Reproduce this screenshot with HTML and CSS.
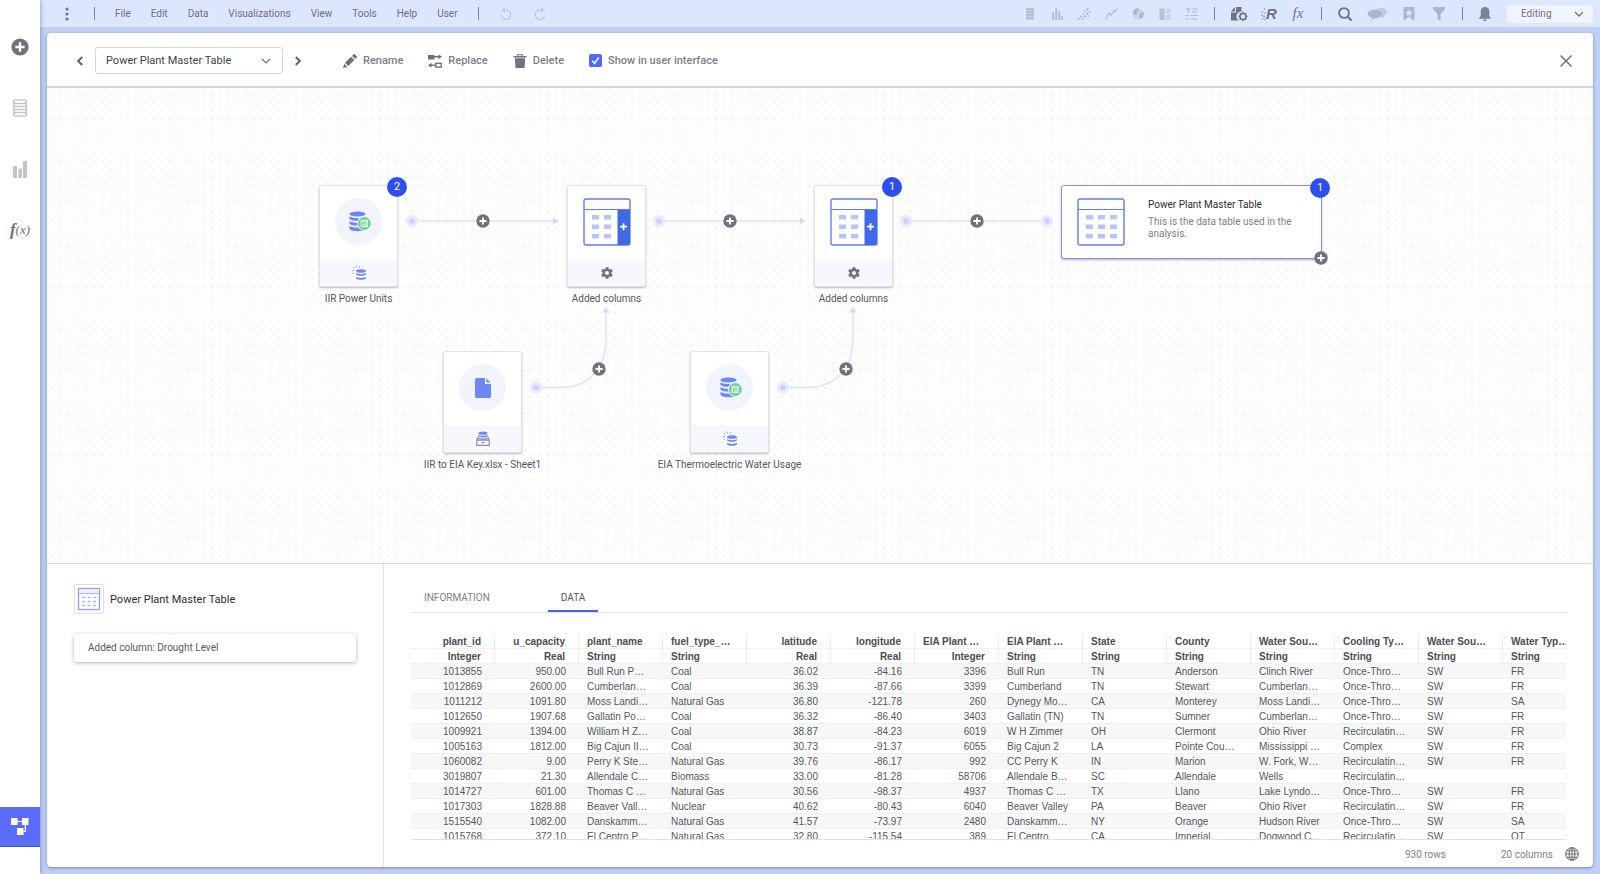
FILE: index.html
```html
<!DOCTYPE html>
<html lang="en">

<head>
    <meta charset="UTF-8">
    <meta name="viewport" content="width=device-width, initial-scale=1.0">
    <title>Data Canvas - Power Plant Master Table</title>
    <link rel="stylesheet" href="styles.css">
</head>

<body>
    <!-- Shared icons -->
    <svg class="sprite" aria-hidden="true">
        <symbol id="i-plus" viewBox="0 0 14 14">
            <circle cx="7" cy="7" r="6.7" fill="#6f727d" />
            <path d="M7 3.4v7.2M3.4 7h7.2" stroke="#fff" stroke-width="1.8" />
        </symbol>
        <symbol id="i-db" viewBox="-2 1 24 24">
            <g fill="#6d87f8">
                <ellipse cx="8.500" cy="5" rx="8" ry="2.500" />
                <path d="M.5 7.200c2 2.400 14 2.400 16 0v2.800c-2 2.600-14 2.600-16 0z" />
                <path d="M.5 12c2 2.400 14 2.400 16 0v2.800c-2 2.600-14 2.600-16 0z" />
                <path d="M.5 16.800c2 2.400 14 2.400 16 0v3.200c-2 3-14 3-16 0z" />
            </g>
            <circle cx="15.300" cy="14.500" r="7.300" fill="#f1f4fd" />
            <circle cx="15.300" cy="14.500" r="6.400" fill="#6fd191" />
            <rect x="12.300" y="11.500" width="6" height="6" fill="none" stroke="#e4f8eb" stroke-width="1.200" />
            <path d="M12.300 13h6M14.800 17.500V15H17v2.500" fill="none" stroke="#e4f8eb" />
        </symbol>
        <symbol id="i-live" viewBox="0 0 16 16">
            <g fill="#6d87f8">
                <ellipse cx="10" cy="6" rx="5" ry="1.800" />
                <path d="M5 8c1.500 1.500 8.500 1.500 10 0v1.200c-1.500 2-8.500 2-10 0z" />
                <path d="M5 11.800c1.500 1.500 8.500 1.500 10 0v1.500c-1.500 2-8.500 2-10 0z" />
            </g>
            <path d="M.8 5.500h2M1.800 2l1.500 1.500M5.200.5v2M8.800 1l-1 1.600M3 7.500L1.500 9" stroke="#8fa2fa" stroke-width="1" />
        </symbol>
        <symbol id="i-stored" viewBox="0 0 16 16">
            <path d="M3.500 5.500L1.800 9v5.400h12.400V9l-1.700-3.500M1.800 9.200h12.400" fill="none" stroke="#8b8f9c" stroke-width="1.200" />
            <path d="M6.600 11.600h2.800" stroke="#6f727d" />
            <g fill="#6d87f8">
                <ellipse cx="8" cy="2.200" rx="4.500" ry="1.600" />
                <path d="M3.500 3.800c1.500 1.300 7.500 1.300 9 0v1.400c-1.500 1.600-7.500 1.600-9 0z" />
                <path d="M3.500 6.600c1.500 1.300 7.500 1.300 9 0v1.400c-2 1-7 1-9 0z" />
            </g>
        </symbol>
        <symbol id="i-gear" viewBox="0 0 24 24">
            <path fill="#6f727d" d="M19.430 12.980c.04-.32.07-.64.07-.98s-.03-.66-.07-.98l2.110-1.650c.19-.15.24-.42.12-.64l-2-3.460c-.12-.22-.39-.3-.61-.22l-2.490 1c-.52-.4-1.080-.73-1.690-.98l-.38-2.650C14.460 2.180 14.250 2 14 2h-4c-.25 0-.46.18-.49.42l-.38 2.650c-.61.25-1.170.59-1.690.98l-2.490-1c-.23-.09-.49 0-.61.22l-2 3.460c-.13.22-.07.49.12.64l2.110 1.650c-.04.32-.07.65-.07.98s.03.66.07.98l-2.110 1.650c-.19.15-.24.42-.12.64l2 3.460c.12.22.39.3.61.22l2.490-1c.52.4 1.080.73 1.690.98l.38 2.650c.03.24.24.42.49.42h4c.25 0 .46-.18.49-.42l.38-2.650c.61-.25 1.170-.59 1.690-.98l2.490 1c.23.09.49 0 .61-.22l2-3.460c.12-.22.07-.49-.12-.64zM12 15.500a3.500 3.500 0 1 1 0-7 3.500 3.500 0 0 1 0 7z" />
        </symbol>
        <symbol id="i-table" viewBox="0 0 48 48">
            <rect x="1" y="1" width="46" height="46" rx="2" fill="#fff" stroke="#5f7df5" stroke-width="1.400" />
            <path d="M1 11.500h46" stroke="#5f7df5" stroke-width="1.200" />
            <g fill="#b9c3fb">
                <path d="M9 17h7v4.500H9zM21 17h7v4.500h-7zM33 17h7v4.500h-7z" />
                <path d="M9 26.500h7V31H9zM21 26.500h7V31h-7zM33 26.500h7V31h-7z" />
                <path d="M9 36h7v4.500H9zM21 36h7v4.500h-7zM33 36h7v4.500h-7z" />
            </g>
        </symbol>
        <symbol id="i-addcols" viewBox="0 0 48 48">
            <rect x="1" y="1" width="46" height="46" rx="2" fill="#fff" stroke="#5f7df5" stroke-width="1.400" />
            <path d="M34.500 11.500H47V45a2 2 0 0 1-2 2H34.500z" fill="#4169e6" />
            <path d="M1 11.500h46" stroke="#5f7df5" stroke-width="1.200" />
            <g fill="#b9c3fb">
                <path d="M9 17h7v4.500H9zM21 17h7v4.500h-7zM9 26.500h7V31H9zM21 26.500h7V31h-7zM9 36h7v4.500H9zM21 36h7v4.500h-7z" />
            </g>
            <path d="M40.500 25.200v7M37 28.700h7" stroke="#fff" stroke-width="1.800" />
        </symbol>
    </svg>

    <!-- Left sidebar -->
    <nav class="sidebar" aria-label="Authoring bar">
        <button class="side-btn" aria-label="Files and data">
            <svg width="18" height="18"><use href="#i-plus" /></svg>
        </button>
        <button class="side-btn" aria-label="Data in analysis">
            <svg width="14" height="18" viewBox="0 0 14 18">
                <rect x="0.800" y="1" width="12.400" height="16" rx="1" fill="#fff" stroke="#c3c5cc" stroke-width="1.600" />
                <path d="M1 4.500h12M1 7.500h12M1 10.500h12M1 13.500h12" stroke="#c3c5cc" stroke-width="1.300" />
            </svg>
        </button>
        <button class="side-btn" aria-label="Visualization types">
            <svg width="14" height="18" viewBox="0 0 14 18">
                <path d="M0 6h4v12H0zM5.500 8.500H9V18H5.500zM10 1h4v17h-4z" fill="#c3c5cc" />
            </svg>
        </button>
        <button class="side-btn side-fx" aria-label="Data functions"><b>f</b>(x)</button>
        <button class="side-btn side-canvas" aria-label="Data canvas">
            <svg width="18" height="18" viewBox="0 0 18 18">
                <path d="M0 0h6.500v7H0zM11 0h6.500v7H11zM6 10h6.500v7H6z" fill="#fff" />
                <path d="M6 3.500h6M14.300 6v7.500H12" fill="none" stroke="#fff" stroke-width="1.200" />
            </svg>
        </button>
    </nav>

    <div class="main">
        <!-- Menu bar -->
        <header class="topbar">
            <button class="more-btn" aria-label="More">
                <svg width="14" height="16" viewBox="0 0 14 16" fill="#6f7482">
                    <circle cx="7" cy="3" r="1.600" />
                    <circle cx="7" cy="8" r="1.600" />
                    <circle cx="7" cy="13" r="1.600" />
                </svg>
            </button>
            <span class="sep"></span>
            <nav class="menu">
                <a href="#file">File</a>
                <a href="#edit">Edit</a>
                <a href="#data">Data</a>
                <a href="#visualizations">Visualizations</a>
                <a href="#view">View</a>
                <a href="#tools">Tools</a>
                <a href="#help">Help</a>
                <a href="#user">User</a>
            </nav>
            <span class="sep"></span>
            <div class="history">
                <button aria-label="Undo">
                    <svg width="14" height="14" viewBox="0 0 14 14">
                        <path d="M5 3.200a4.800 4.800 0 1 1-2.800 5" fill="none" stroke="#bdc6de" stroke-width="1.200" />
                        <path d="M6 .5v5.200L2.500 3z" fill="#bdc6de" />
                    </svg>
                </button>
                <button aria-label="Redo">
                    <svg width="14" height="14" viewBox="0 0 14 14">
                        <path d="M9 3.200a4.800 4.800 0 1 0 2.800 5" fill="none" stroke="#bdc6de" stroke-width="1.200" />
                        <path d="M8 .5v5.200L11.500 3z" fill="#bdc6de" />
                    </svg>
                </button>
            </div>

            <div class="tools">
                <div class="tool-group faded">
                    <button aria-label="Table">
                        <svg width="14" height="14" viewBox="0 0 14 14"><path d="M3 1h8v12H3z" fill="#c3cade" /><path d="M3 2h8M3 5h8M3 8h8M3 11h8" stroke="#a9b0c4" stroke-width="1.600" /></svg>
                    </button>
                    <button aria-label="Bar chart">
                        <svg width="14" height="14" viewBox="0 0 14 14"><path d="M3.200 13V5M6.200 13V1.500M9.200 13V4M12 13V9" stroke="#a9b0c4" stroke-width="1.800" /></svg>
                    </button>
                    <button aria-label="Scatter plot">
                        <svg width="14" height="14" viewBox="0 0 14 14" fill="#a9b0c4"><circle cx="2" cy="12" r="1" /><circle cx="4" cy="9.500" r="1" /><circle cx="5.500" cy="12" r="1" /><circle cx="6" cy="7" r="1" /><circle cx="8" cy="9.500" r="1.200" /><circle cx="7.500" cy="4" r="1" /><circle cx="10" cy="6.500" r="1.200" /><circle cx="10.500" cy="2.500" r="1.200" /><circle cx="12.500" cy="5" r="1" /><circle cx="11.500" cy="9" r="1" /></svg>
                    </button>
                    <button aria-label="Line chart">
                        <svg width="14" height="14" viewBox="0 0 14 14"><path d="M1.500 12.500L5 6l2 2.500 3-5 .8 1.500L13.500 1.500" fill="none" stroke="#a9b0c4" stroke-width="1.200" /></svg>
                    </button>
                    <button aria-label="Map chart">
                        <svg width="14" height="14" viewBox="0 0 14 14"><circle cx="7" cy="7" r="5.800" fill="#c9d1e6" /><path d="M2.500 3.500Q5 .8 7.500 1.500L8 4 5.500 5.500 6 7.500 4 8 2 6zM8.500 7l3-2.500 1.500 1.500-.8 4L9.500 12 8 9.500z" fill="#a3aabd" /></svg>
                    </button>
                    <button aria-label="Treemap">
                        <svg width="14" height="14" viewBox="0 0 14 14"><path d="M1.500 1.500h5.200v11.500H1.500z" fill="#b3b9ca" /><path d="M8 1.500h4.700v5H8zM8 8h4.700v5H8z" fill="#c6cce0" /></svg>
                    </button>
                    <button aria-label="Text area">
                        <svg width="14" height="14" viewBox="0 0 14 14"><path d="M1 1.800h4.500M3.200 1.800v4M7 2h6M7 5h5M1 8.500h3M5.500 8.500H13M1 12h3M5.500 12H13" fill="none" stroke="#a9b0c4" stroke-width="1.200" /></svg>
                    </button>
                </div>
                <span class="sep"></span>
                <div class="tool-group tight">
                    <button aria-label="Document settings">
                        <svg width="18" height="16" viewBox="0 0 18 16"><path d="M6 1h5.500v4.500A4.800 4.800 0 0 0 9 14.500H1V6.500h5z" fill="#6f7482" /><path d="M5 1v4.500H.8z" fill="#6f7482" /><circle cx="13" cy="10.500" r="3" fill="none" stroke="#6f7482" stroke-width="1.600" /><path d="M13 5.800v1.500M13 13.700v1.500M8.500 10.500H10M16 10.500h1.500M9.800 7.300l1 1M15.200 12.700l1 1M16.200 7.300l-1 1M10.800 12.700l-1 1" stroke="#6f7482" stroke-width="1.400" /></svg>
                    </button>
                    <button class="r-btn" aria-label="R script">
                        <svg width="5" height="14" viewBox="0 0 5 14" fill="#8c91a0"><circle cx="3.500" cy="2" r=".8" /><circle cx="1.500" cy="5" r=".8" /><circle cx="4" cy="6" r=".8" /><circle cx="1" cy="8.500" r=".8" /><circle cx="3" cy="9.500" r=".9" /><circle cx="1.500" cy="12" r=".8" /><circle cx="4" cy="12.500" r=".7" /></svg>
                        R
                    </button>
                    <button class="fx-btn" aria-label="Expression">fx</button>
                </div>
                <span class="sep"></span>
                <div class="tool-group wide">
                    <button aria-label="Search">
                        <svg width="16" height="16" viewBox="0 0 16 16"><circle cx="7" cy="7" r="4.900" fill="none" stroke="#6f7482" stroke-width="1.900" /><path d="M10.500 10.500l4 4" stroke="#6f7482" stroke-width="2.200" /></svg>
                    </button>
                    <button aria-label="Comments">
                        <svg width="20" height="16" viewBox="0 0 20 16"><path d="M14 2c3.300 0 5.800 1.900 5.800 4.300 0 1.700-1 3-2.800 3.800l.6 2.400-3.200-2z" fill="#c2cae2" /><ellipse cx="13.500" cy="6" rx="6" ry="4.200" fill="#c2cae2" /><path d="M8 3.800c4 0 7 1.800 7 4.200s-3 4.300-7 4.300l-3.600 2 .5-2.600C2.300 11 .8 9.600.8 8 .8 5.600 4 3.800 8 3.800z" fill="#aeb5ca" /></svg>
                    </button>
                    <button aria-label="Bookmarks">
                        <svg width="16" height="16" viewBox="0 0 16 16"><path d="M2.500 1h11v14L8 10.800 2.500 15z" fill="#aeb5ca" /><path d="M8 3l1.100 2.500 2.700.2-2 1.800.6 2.600L8 8.700l-2.400 1.400.6-2.600-2-1.800 2.700-.2z" fill="#dce6fe" /></svg>
                    </button>
                    <button aria-label="Filters">
                        <svg width="16" height="16" viewBox="0 0 16 16"><path d="M2 1h12v2L9.500 8v6.800l-3-1.800V8L2 3z" fill="#aeb5ca" /></svg>
                    </button>
                </div>
                <span class="sep"></span>
                <button aria-label="Notifications">
                    <svg width="14" height="16" viewBox="0 0 14 16"><path d="M7 1c2.800 0 4.300 2 4.300 4.600V10l1.500 2v.8H1.200V12l1.500-2V5.600C2.700 3 4.200 1 7 1zM5.200 13.500h3.600c-.2 1-.9 1.500-1.800 1.500s-1.600-.5-1.800-1.500z" fill="#7d8291" /></svg>
                </button>
                <select class="mode-select" aria-label="Mode">
                    <option>Editing</option>
                    <option>Viewing</option>
                </select>
            </div>
        </header>

        <!-- Data canvas panel -->
        <main class="panel">
            <div class="panel-header">
                <button class="step-btn" aria-label="Previous table">
                    <svg width="14" height="14" viewBox="0 0 14 14"><path d="M9.200 3L5.200 7l4 4" fill="none" stroke="#5f626d" stroke-width="2" /></svg>
                </button>
                <select class="table-select" aria-label="Data table">
                    <option>Power Plant Master Table</option>
                </select>
                <button class="step-btn" aria-label="Next table">
                    <svg width="14" height="14" viewBox="0 0 14 14"><path d="M4.800 3l4 4-4 4" fill="none" stroke="#5f626d" stroke-width="2" /></svg>
                </button>
                <div class="actions">
                    <button>
                        <svg width="14" height="14" viewBox="0 0 14 14" fill="#6f727d"><path d="M0 14l1.200-4.300 3.200 3.200zM2 8.800l6-6L11.300 6l-6 6zM9 2l1.500-1.600c.4-.4 1-.4 1.400 0l1.800 1.800c.4.4.4 1 0 1.400L12.200 5z" /></svg>
                        Rename
                    </button>
                    <button>
                        <svg width="14" height="14" viewBox="0 0 14 14"><path d="M0 1h6.500v4.500H0z" fill="#6f727d" /><path d="M6 2.800h5M3 11.200h4" stroke="#6f727d" stroke-width="1.400" /><path d="M10.500.3L14 2.800l-3.500 2.500zM3.500 8.700L0 11.200l3.500 2.500z" fill="#6f727d" /><rect x="7.700" y="9.300" width="5.500" height="3.800" fill="none" stroke="#6f727d" stroke-width="1.400" /></svg>
                        Replace
                    </button>
                    <button>
                        <svg width="14" height="14" viewBox="0 0 14 14"><path d="M.5 2h13v1.500H.5zM1.800 4.300h10.400L11.500 14h-9z" fill="#6f727d" /><path d="M4.500 2V.7h5V2" fill="none" stroke="#6f727d" /></svg>
                        Delete
                    </button>
                    <label class="check">
                        <input type="checkbox" checked>
                        Show in user interface
                    </label>
                </div>
                <button class="close-btn" aria-label="Close">
                    <svg width="14" height="14" viewBox="0 0 14 14"><path d="M1.500 1.500l11 11M12.500 1.500l-11 11" stroke="#6f727d" stroke-width="1.500" /></svg>
                </button>
            </div>

            <!-- Node canvas -->
            <section class="canvas" aria-label="Data canvas">
                <svg class="edges" aria-hidden="true">
                    <defs>
                        <pattern id="dots" x="1.600" y="5" width="8.400" height="8.400" patternUnits="userSpaceOnUse">
                            <rect width="1.500" height="1.500" x="3" y="0.200" fill="#e6e8ef" />
                        </pattern>
                    </defs>
                    <rect width="100%" height="100%" fill="url(#dots)" />
                    <g fill="none" stroke="#dfe4fd" stroke-width="1.600">
                        <path d="M365 133h143M612 133h143M859 133h141" />
                        <path d="M489 299.500h24c30 0 46-20 46-50V224M736 299.500h24c30 0 46-20 46-50V224" />
                    </g>
                    <g fill="#d2d9fc">
                        <path d="M506 129.500l5.500 3.500-5.500 3.500zM753 129.500l5.500 3.500-5.500 3.500z" />
                        <path d="M555.500 224.500l3.500-5.500 3.500 5.500zM802.500 224.500l3.500-5.500 3.500 5.500z" />
                    </g>
                    <g fill="#c9d2fc" stroke="#e7ebfe" stroke-width="3.500">
                        <circle cx="365" cy="133" r="4.500" />
                        <circle cx="612" cy="133" r="4.500" />
                        <circle cx="859" cy="133" r="4.500" />
                        <circle cx="1000" cy="133" r="4.500" />
                        <circle cx="489" cy="299.500" r="4.500" />
                        <circle cx="736" cy="299.500" r="4.500" />
                    </g>
                </svg>

                <article class="node node-units">
                    <div class="card">
                        <div class="card-body"><span class="disc"><svg width="24" height="24"><use href="#i-db" /></svg></span></div>
                        <div class="card-foot"><svg width="16" height="16"><use href="#i-live" /></svg></div>
                    </div>
                    <span class="badge">2</span>
                    <p>IIR Power Units</p>
                </article>

                <article class="node node-added-1">
                    <div class="card">
                        <div class="card-body"><svg width="48" height="48"><use href="#i-addcols" /></svg></div>
                        <button class="card-foot" aria-label="Settings"><svg width="14" height="14"><use href="#i-gear" /></svg></button>
                    </div>
                    <p>Added columns</p>
                </article>

                <article class="node node-added-2">
                    <div class="card">
                        <div class="card-body"><svg width="48" height="48"><use href="#i-addcols" /></svg></div>
                        <button class="card-foot" aria-label="Settings"><svg width="14" height="14"><use href="#i-gear" /></svg></button>
                    </div>
                    <span class="badge">1</span>
                    <p>Added columns</p>
                </article>

                <article class="node node-key">
                    <div class="card">
                        <div class="card-body"><span class="disc"><svg width="16" height="20" viewBox="0 0 16 20"><path d="M1.500 0H10v6h6v12.500a1.500 1.500 0 0 1-1.500 1.500h-13A1.500 1.500 0 0 1 0 18.500v-17A1.500 1.500 0 0 1 1.500 0zM11.500.5L15.500 4.500h-4z" fill="#6d87f8" /></svg></span></div>
                        <div class="card-foot"><svg width="16" height="16"><use href="#i-stored" /></svg></div>
                    </div>
                    <p>IIR to EIA Key.xlsx - Sheet1</p>
                </article>

                <article class="node node-usage">
                    <div class="card">
                        <div class="card-body"><span class="disc"><svg width="24" height="24"><use href="#i-db" /></svg></span></div>
                        <div class="card-foot"><svg width="16" height="16"><use href="#i-live" /></svg></div>
                    </div>
                    <p>EIA Thermoelectric Water Usage</p>
                </article>

                <article class="result">
                    <svg width="48" height="48"><use href="#i-table" /></svg>
                    <div>
                        <h2>Power Plant Master Table</h2>
                        <p>This is the data table used in the analysis.</p>
                    </div>
                    <span class="badge">1</span>
                    <button class="add-btn add-result" aria-label="Add"><svg width="14" height="14"><use href="#i-plus" /></svg></button>
                </article>

                <button class="add-btn add-1" aria-label="Add step"><svg width="14" height="14"><use href="#i-plus" /></svg></button>
                <button class="add-btn add-2" aria-label="Add step"><svg width="14" height="14"><use href="#i-plus" /></svg></button>
                <button class="add-btn add-3" aria-label="Add step"><svg width="14" height="14"><use href="#i-plus" /></svg></button>
                <button class="add-btn add-4" aria-label="Add step"><svg width="14" height="14"><use href="#i-plus" /></svg></button>
                <button class="add-btn add-5" aria-label="Add step"><svg width="14" height="14"><use href="#i-plus" /></svg></button>
            </section>

            <!-- Details -->
            <section class="details">
                <aside class="summary">
                    <h2>
                        <span class="thumb"><svg width="24" height="24" viewBox="0 0 24 24"><rect x="1.500" y="1.500" width="21" height="21" fill="#fff" stroke="#8c9df9" stroke-width="1.300" /><path d="M2 2.500h20v4H2z" fill="#eceffe" /><path d="M2 6.500h20" stroke="#a9b6fb" /><path d="M5 10.500h3m2.500 0h3m2.500 0h3M5 14.500h3m2.500 0h3m2.500 0h3M5 18.500h3m2.500 0h3m2.500 0h3" stroke="#a9b6fb" stroke-width="1.700" /></svg></span>
                        Power Plant Master Table
                    </h2>
                    <p class="step">Added column: Drought Level</p>
                </aside>

                <div class="preview">
                    <div class="tabs" role="tablist">
                        <button role="tab" aria-selected="false">INFORMATION</button>
                        <button role="tab" aria-selected="true" class="active">DATA</button>
                    </div>
                    <div class="table-wrap">
                        <table>
                            <thead>
                                <tr><th>plant_id</th><th>u_capacity</th><th>plant_name</th><th>fuel_type_…</th><th>latitude</th><th>longitude</th><th>EIA Plant …</th><th>EIA Plant …</th><th>State</th><th>County</th><th>Water Sou…</th><th>Cooling Ty…</th><th>Water Sou…</th><th>Water Typ…</th></tr>
                                <tr><th>Integer</th><th>Real</th><th>String</th><th>String</th><th>Real</th><th>Real</th><th>Integer</th><th>String</th><th>String</th><th>String</th><th>String</th><th>String</th><th>String</th><th>String</th></tr>
                            </thead>
                            <tbody>
                                <tr><td>1013855</td><td>950.00</td><td>Bull Run P…</td><td>Coal</td><td>36.02</td><td>-84.16</td><td>3396</td><td>Bull Run</td><td>TN</td><td>Anderson</td><td>Clinch River</td><td>Once-Thro…</td><td>SW</td><td>FR</td></tr>
                                <tr><td>1012869</td><td>2600.00</td><td>Cumberlan…</td><td>Coal</td><td>36.39</td><td>-87.66</td><td>3399</td><td>Cumberland</td><td>TN</td><td>Stewart</td><td>Cumberlan…</td><td>Once-Thro…</td><td>SW</td><td>FR</td></tr>
                                <tr><td>1011212</td><td>1091.80</td><td>Moss Landi…</td><td>Natural Gas</td><td>36.80</td><td>-121.78</td><td>260</td><td>Dynegy Mo…</td><td>CA</td><td>Monterey</td><td>Moss Landi…</td><td>Once-Thro…</td><td>SW</td><td>SA</td></tr>
                                <tr><td>1012650</td><td>1907.68</td><td>Gallatin Po…</td><td>Coal</td><td>36.32</td><td>-86.40</td><td>3403</td><td>Gallatin (TN)</td><td>TN</td><td>Sumner</td><td>Cumberlan…</td><td>Once-Thro…</td><td>SW</td><td>FR</td></tr>
                                <tr><td>1009921</td><td>1394.00</td><td>William H Z…</td><td>Coal</td><td>38.87</td><td>-84.23</td><td>6019</td><td>W H Zimmer</td><td>OH</td><td>Clermont</td><td>Ohio River</td><td>Recirculatin…</td><td>SW</td><td>FR</td></tr>
                                <tr><td>1005163</td><td>1812.00</td><td>Big Cajun II…</td><td>Coal</td><td>30.73</td><td>-91.37</td><td>6055</td><td>Big Cajun 2</td><td>LA</td><td>Pointe Cou…</td><td>Mississippi …</td><td>Complex</td><td>SW</td><td>FR</td></tr>
                                <tr><td>1060082</td><td>9.00</td><td>Perry K Ste…</td><td>Natural Gas</td><td>39.76</td><td>-86.17</td><td>992</td><td>CC Perry K</td><td>IN</td><td>Marion</td><td>W. Fork, W…</td><td>Recirculatin…</td><td>SW</td><td>FR</td></tr>
                                <tr><td>3019807</td><td>21.30</td><td>Allendale C…</td><td>Biomass</td><td>33.00</td><td>-81.28</td><td>58706</td><td>Allendale B…</td><td>SC</td><td>Allendale</td><td>Wells</td><td>Recirculatin…</td><td></td><td></td></tr>
                                <tr><td>1014727</td><td>601.00</td><td>Thomas C …</td><td>Natural Gas</td><td>30.56</td><td>-98.37</td><td>4937</td><td>Thomas C …</td><td>TX</td><td>Llano</td><td>Lake Lyndo…</td><td>Once-Thro…</td><td>SW</td><td>FR</td></tr>
                                <tr><td>1017303</td><td>1828.88</td><td>Beaver Vall…</td><td>Nuclear</td><td>40.62</td><td>-80.43</td><td>6040</td><td>Beaver Valley</td><td>PA</td><td>Beaver</td><td>Ohio River</td><td>Recirculatin…</td><td>SW</td><td>FR</td></tr>
                                <tr><td>1515540</td><td>1082.00</td><td>Danskamm…</td><td>Natural Gas</td><td>41.57</td><td>-73.97</td><td>2480</td><td>Danskamm…</td><td>NY</td><td>Orange</td><td>Hudson River</td><td>Once-Thro…</td><td>SW</td><td>SA</td></tr>
                                <tr><td>1015768</td><td>372.10</td><td>El Centro P…</td><td>Natural Gas</td><td>32.80</td><td>-115.54</td><td>389</td><td>El Centro</td><td>CA</td><td>Imperial</td><td>Dogwood C…</td><td>Recirculatin…</td><td>SW</td><td>OT</td></tr>
                            </tbody>
                        </table>
                    </div>
                    <footer class="counts">
                        <span>930 rows</span>
                        <span>20 columns</span>
                        <svg width="14" height="14" viewBox="0 0 14 14" fill="none" stroke="#5f626d"><circle cx="7" cy="7" r="6.300" /><ellipse cx="7" cy="7" rx="2.900" ry="6.300" /><path d="M7 .7v12.600M.7 7h12.600M1.600 3.800h10.800M1.600 10.200h10.800" stroke-width=".9" /></svg>
                    </footer>
                </div>
            </section>
        </main>
    </div>
</body>

</html>
```
FILE: styles.css
```css
/* General Reset */
* {
    margin: 0;
    padding: 0;
    box-sizing: border-box;
}

body {
    height: 100vh;
    display: flex;
    overflow: hidden;
    background: #bfcff5;
    color: #55575f;
    font-family: Roboto, "Liberation Sans", sans-serif;
    font-size: 10px;
}

button,
select {
    font: inherit;
    color: inherit;
    background: none;
    border: none;
    cursor: pointer;
}

button {
    display: flex;
    align-items: center;
    justify-content: center;
}

a {
    color: inherit;
    text-decoration: none;
}

svg {
    display: block;
    flex: none;
}

.sprite {
    position: absolute;
    width: 0;
    height: 0;
}

/* Sidebar */
.sidebar {
    flex: none;
    width: 40px;
    padding: 27px 0;
    display: flex;
    flex-direction: column;
    gap: 21px;
    background: #fff;
    box-shadow: 1px 0 4px rgba(60, 80, 150, 0.4);
    z-index: 1;
}

.side-btn {
    height: 40px;
}

.side-fx {
    font: italic 13px "Liberation Serif", serif;
    color: #6f727d;
}

.side-fx b {
    font-size: 17px;
}

.side-canvas {
    margin-top: auto;
    background: #5b6cfa;
    border-bottom: 1px solid #3f55e8;
}

/* Menu Bar */
.main {
    flex: 1;
    min-width: 0;
    display: flex;
    flex-direction: column;
}

.topbar {
    height: 27px;
    padding: 0 7px 0 20px;
    display: flex;
    align-items: center;
    gap: 20px;
    background: #dce6fe;
    color: #6c7080;
}

.sep {
    width: 1px;
    height: 13px;
    background: #80869a;
}

.menu {
    display: flex;
    gap: 20px;
}

.history {
    display: flex;
    gap: 20px;
}

.tools {
    margin-left: auto;
    display: flex;
    align-items: center;
    gap: 15px;
}

.tool-group {
    display: flex;
    align-items: center;
    gap: 13px;
}

.tool-group.faded {
    opacity: 0.8;
}

.tool-group.tight {
    gap: 12px;
}

.tool-group.wide {
    gap: 14px;
}

.r-btn {
    width: 18px;
    font: italic bold 15px "Liberation Sans", sans-serif;
    color: #6f7482;
}

.fx-btn {
    width: 16px;
    font: italic 15px "Liberation Serif", serif;
    color: #6f7482;
}

.mode-select {
    width: 86px;
    height: 18px;
    padding-left: 14px;
    border-radius: 3px;
    appearance: none;
    background: #f1f4fe url("data:image/svg+xml,%3Csvg xmlns='http://www.w3.org/2000/svg' width='10' height='6'%3E%3Cpath d='M1 1l4 4 4-4' fill='none' stroke='%236c7080' stroke-width='1.300'/%3E%3C/svg%3E") no-repeat right 9px center;
}

/* Panel */
.panel {
    flex: 1;
    min-height: 0;
    margin: 6px 7px 7px;
    display: grid;
    grid-template-rows: auto minmax(0, 475fr) minmax(0, 304fr);
    background: #fff;
    border-radius: 4px;
    box-shadow: 0 1px 3px rgba(60, 80, 140, 0.6);
    overflow: hidden;
}

.panel-header {
    height: 55px;
    padding: 2px 20px 0 26px;
    display: flex;
    align-items: center;
    gap: 8px;
    border-bottom: 2px solid #d5d6d9;
    font-size: 11px;
}

.step-btn {
    width: 14px;
    height: 24px;
}

.table-select {
    width: 188px;
    height: 27px;
    padding-left: 10px;
    border: 1px solid #d3d3e4;
    border-radius: 3px;
    appearance: none;
    color: #3f4149;
    background: #fff url("data:image/svg+xml,%3Csvg xmlns='http://www.w3.org/2000/svg' width='10' height='6'%3E%3Cpath d='M1 1l4 4 4-4' fill='none' stroke='%236c7080' stroke-width='1.200'/%3E%3C/svg%3E") no-repeat right 11px center;
}

.actions {
    margin-left: 30px;
    display: flex;
    gap: 25px;
    color: #7b7e88;
    font-weight: 500;
}

.actions button,
.check {
    display: flex;
    align-items: center;
    gap: 6px;
}

.check input {
    appearance: none;
    width: 13px;
    height: 13px;
    border-radius: 2px;
    background: #5468f8 url("data:image/svg+xml,%3Csvg xmlns='http://www.w3.org/2000/svg' width='13' height='13'%3E%3Cpath d='M3.200 6.800l2.400 2.600 4.200-6' fill='none' stroke='white' stroke-width='1.600'/%3E%3C/svg%3E") center no-repeat;
}

.close-btn {
    margin-left: auto;
}

/* Node Canvas */
.canvas {
    position: relative;
    overflow: hidden;
    background: #fdfdfe;
}

.edges {
    position: absolute;
    width: 100%;
    height: 100%;
}

.node {
    position: absolute;
    width: 79px;
    display: flex;
    flex-direction: column;
    align-items: center;
    gap: 6px;
}

.node p {
    white-space: nowrap;
}

.node-units {
    left: 272px;
    top: 97px;
}

.node-added-1 {
    left: 520px;
    top: 97px;
}

.node-added-2 {
    left: 767px;
    top: 97px;
}

.node-key {
    left: 396px;
    top: 263px;
}

.node-usage {
    left: 643px;
    top: 263px;
}

.card {
    width: 79px;
    background: #fff;
    border: 1px solid #e1e3ea;
    border-radius: 3px;
    box-shadow: 0 1px 2px rgba(60, 62, 75, 0.35);
    overflow: hidden;
}

.card-body {
    height: 73px;
    padding-bottom: 2px;
    display: flex;
    align-items: center;
    justify-content: center;
}

.disc {
    width: 47px;
    height: 47px;
    border-radius: 50%;
    background: #f1f4fd;
    display: flex;
    align-items: center;
    justify-content: center;
}

.card-foot {
    width: 100%;
    height: 27px;
    display: flex;
    align-items: center;
    justify-content: center;
    background: #f7f8fd;
}

.badge {
    position: absolute;
    top: -8px;
    right: -9px;
    width: 20px;
    height: 20px;
    border-radius: 50%;
    background: #2e4ff0;
    color: #fff;
    font-size: 11px;
    line-height: 20px;
    text-align: center;
}

.result {
    position: absolute;
    left: 1014px;
    top: 97px;
    width: 261px;
    height: 74px;
    padding: 12px 20px 12px 15px;
    display: flex;
    gap: 23px;
    background: #fff;
    border: 1px solid #7f95f5;
    border-radius: 3px;
    box-shadow: 0 1px 2px rgba(60, 62, 75, 0.4);
}

.result h2 {
    font-size: 10px;
    font-weight: 400;
    line-height: 14px;
    color: #2b2d33;
}

.result p {
    margin-top: 4px;
    line-height: 12px;
    color: #7d808b;
}

.add-btn {
    position: absolute;
    width: 14px;
    height: 14px;
}

.add-result {
    right: -7px;
    bottom: -7px;
}

.add-1 {
    left: 429px;
    top: 126px;
}

.add-2 {
    left: 676px;
    top: 126px;
}

.add-3 {
    left: 923px;
    top: 126px;
}

.add-4 {
    left: 545px;
    top: 274px;
}

.add-5 {
    left: 792px;
    top: 274px;
}

/* Details */
.details {
    display: grid;
    grid-template-columns: 337px minmax(0, 1fr);
    border-top: 1px solid #d9dbe2;
}

.summary {
    padding: 20px 27px;
    border-right: 1px solid #dfe1e8;
}

.summary h2 {
    display: flex;
    align-items: center;
    gap: 6px;
    font-size: 11px;
    font-weight: 400;
    color: #2b2d33;
}

.thumb {
    padding: 2px;
    border: 1px solid #dcdff0;
    border-radius: 2px;
}

.step {
    margin-top: 20px;
    padding: 0 14px;
    line-height: 28px;
    border-radius: 3px;
    box-shadow: 0 1px 4px rgba(0, 0, 0, 0.3);
}

.preview {
    min-height: 0;
    padding-left: 27px;
    display: flex;
    flex-direction: column;
}

.tabs {
    margin-right: 27px;
    padding-top: 20px;
    display: flex;
    gap: 45px;
    border-bottom: 1px solid #dfe1f0;
}

.tabs button {
    height: 28px;
    padding: 0 13px;
    border-bottom: 2px solid transparent;
    color: #7d808b;
}

.tabs .active {
    color: #55575f;
    border-color: #4a60ee;
}

/* Data Table */
.table-wrap {
    flex: 1;
    min-height: 0;
    margin: 21px 27px 0 0;
    overflow: hidden;
    border-bottom: 1px solid #dfe1ea;
}

table {
    width: 1176px;
    table-layout: fixed;
    border-collapse: separate;
    border-spacing: 0;
    font-family: "Liberation Sans", Arial, sans-serif;
    font-size: 10px;
    white-space: nowrap;
}

th,
td {
    height: 15px;
    padding: 2px 0 0 8px;
    line-height: 12px;
    text-align: left;
    border-bottom: 1px solid #f0f0f1;
}

th {
    color: #4a4c53;
    border-right: 1px solid #ececee;
}

td {
    color: #55575e;
}

tbody tr:nth-child(odd) {
    background: #f7f7f8;
}

th:nth-child(1),
th:nth-child(2),
th:nth-child(5),
th:nth-child(6),
tr:nth-child(2) th:nth-child(7),
td:nth-child(1),
td:nth-child(2),
td:nth-child(5),
td:nth-child(6),
td:nth-child(7) {
    padding-right: 13px;
    text-align: right;
}

.counts {
    flex: none;
    height: 27px;
    padding: 1px 14px 0 0;
    display: flex;
    align-items: center;
    justify-content: flex-end;
    color: #7d808b;
}

.counts span:first-child {
    margin-right: 55px;
}

.counts svg {
    margin-left: 12px;
}
```
